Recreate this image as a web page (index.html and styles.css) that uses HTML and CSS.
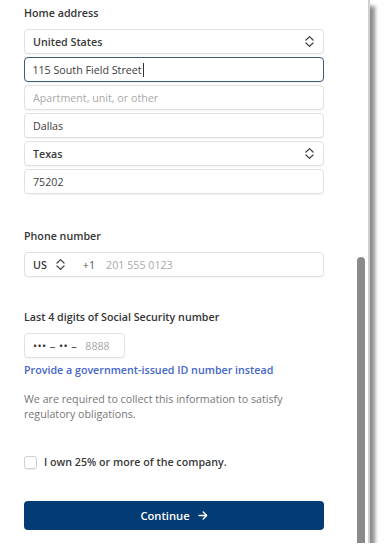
FILE: index.html
```html
<!DOCTYPE html>
<html lang="en">
<head>
<meta charset="utf-8">
<title>Home address</title>
<link rel="stylesheet" href="styles.css">
</head>
<body>
<div class="window">
  <main class="form">
    <section class="group">
      <div class="label">Home address</div>
      <div class="stack">
        <div class="field select">
          <span class="value strong">United States</span>
          <svg class="chev" width="9" height="13" viewBox="0 0 9 13"><path d="M1 5 L4.5 1.6 L8 5 M1 8 L4.5 11.4 L8 8" fill="none" stroke="#444" stroke-width="1.3" stroke-linecap="round" stroke-linejoin="round"/></svg>
        </div>
        <div class="field focus"><span class="value">115 South Field Street</span><span class="caret"></span></div>
        <div class="field"><span class="placeholder">Apartment, unit, or other</span></div>
        <div class="field"><span class="value">Dallas</span></div>
        <div class="field select">
          <span class="value strong">Texas</span>
          <svg class="chev" width="9" height="13" viewBox="0 0 9 13"><path d="M1 5 L4.5 1.6 L8 5 M1 8 L4.5 11.4 L8 8" fill="none" stroke="#444" stroke-width="1.3" stroke-linecap="round" stroke-linejoin="round"/></svg>
        </div>
        <div class="field"><span class="value">75202</span></div>
      </div>
    </section>

    <section class="group phone-group">
      <div class="label">Phone number</div>
      <div class="field phone">
        <span class="value strong">US</span>
        <svg class="chev small" width="9" height="13" viewBox="0 0 9 13"><path d="M1 5 L4.5 1.6 L8 5 M1 8 L4.5 11.4 L8 8" fill="none" stroke="#444" stroke-width="1.3" stroke-linecap="round" stroke-linejoin="round"/></svg>
        <span class="code">+1</span>
        <span class="placeholder">201 555 0123</span>
      </div>
    </section>

    <section class="group ssn-group">
      <div class="label">Last 4 digits of Social Security number</div>
      <div class="field ssn"><span class="mask">••• – •• –</span><span class="placeholder">8888</span></div>
      <a class="link" href="#">Provide a government-issued ID number instead</a>
      <p class="note">We are required to collect this information to satisfy regulatory obligations.</p>
    </section>

    <label class="check">
      <span class="box"></span>
      <span>I own 25% or more of the company.</span>
    </label>

    <button class="continue" type="button">
      <span>Continue</span>
      <svg width="10" height="9" viewBox="0 0 10 9"><path d="M1 4.5 H8.6 M5.2 1 L8.7 4.5 L5.2 8" fill="none" stroke="#fff" stroke-width="1.4" stroke-linecap="round" stroke-linejoin="round"/></svg>
    </button>
  </main>
  <div class="scrollbar"><div class="thumb"></div></div>
</div>
</body>
</html>
```

FILE: styles.css
```css
html, body {
  margin: 0;
  padding: 0;
  background: #ffffff;
}

body {
  font-family: "Open Sans", "Noto Sans", Arial, sans-serif;
  color: #333;
}

.window {
  width: 370px;
  height: 543px;
  box-sizing: border-box;
  display: flex;
  background: #fff;
  border-right: 2px solid #cfcfcf;
  box-shadow: 5px 6px 4px rgba(0, 0, 0, 0.45);
  overflow: hidden;
}

.form {
  width: 356px;
  box-sizing: border-box;
  padding: 5px 0 0 24px;
  display: flex;
  flex-direction: column;
}

.group {
  width: 300px;
  display: flex;
  flex-direction: column;
}

.label {
  font-size: 10.7px;
  line-height: 16px;
  font-weight: 600;
  color: #353535;
  margin-bottom: 8px;
}

.stack {
  display: flex;
  flex-direction: column;
  gap: 3px;
}

.field {
  height: 25px;
  box-sizing: border-box;
  border: 1px solid #e1e1e1;
  border-radius: 4px;
  box-shadow: 0 1px 1px rgba(0, 0, 0, 0.05);
  display: flex;
  align-items: center;
  padding: 0 9px 0 8px;
  font-size: 10.7px;
  color: #3d3d3d;
  background: #fff;
}

.field.focus {
  border: 1.6px solid #3d5a7c;
  padding-left: 7.4px;
}

.caret {
  width: 1px;
  height: 14px;
  background: #333;
  margin-left: 1px;
}

.select {
  justify-content: space-between;
}

.strong {
  font-weight: 600;
  color: #3a3a3a;
}

.placeholder {
  color: #a9a9a9;
}

.phone-group {
  margin-top: 34px;
}

.phone .chev {
  margin-left: 9px;
}

.phone .code {
  margin-left: 18px;
  color: #555;
}

.phone .placeholder {
  margin-left: 11px;
}

.ssn-group {
  margin-top: 32px;
}

.ssn {
  width: 101px;
}

.mask {
  color: #333;
  font-size: 11px;
  letter-spacing: 0.4px;
  margin-right: 8px;
}

.link {
  margin-top: 4px;
  font-size: 10.7px;
  line-height: 16px;
  font-weight: 600;
  color: #4566c6;
  text-decoration: none;
}

.note {
  margin: 14px 0 0;
  font-size: 10.7px;
  line-height: 15px;
  color: #777;
  width: 270px;
}

.check {
  margin-top: 32px;
  display: flex;
  align-items: center;
  gap: 7px;
  font-size: 10.7px;
  line-height: 16px;
  font-weight: 600;
  color: #3a3a3a;
}

.box {
  width: 13px;
  height: 13px;
  box-sizing: border-box;
  border: 1px solid #d0d0d0;
  border-radius: 3px;
  box-shadow: 0 1px 1px rgba(0, 0, 0, 0.06);
}

.continue {
  margin-top: 31px;
  width: 300px;
  height: 29px;
  border: none;
  border-radius: 4px;
  background: #033b74;
  color: #fff;
  font-family: inherit;
  font-size: 11.2px;
  font-weight: 600;
  display: flex;
  align-items: center;
  justify-content: center;
  gap: 8px;
  padding: 0;
}

.scrollbar {
  width: 12px;
  display: flex;
  flex-direction: column;
}

.thumb {
  margin-top: 257px;
  margin-left: 1px;
  width: 8px;
  height: 290px;
  background: #8a8a8a;
  border-radius: 4px 4px 0 0;
}
```
